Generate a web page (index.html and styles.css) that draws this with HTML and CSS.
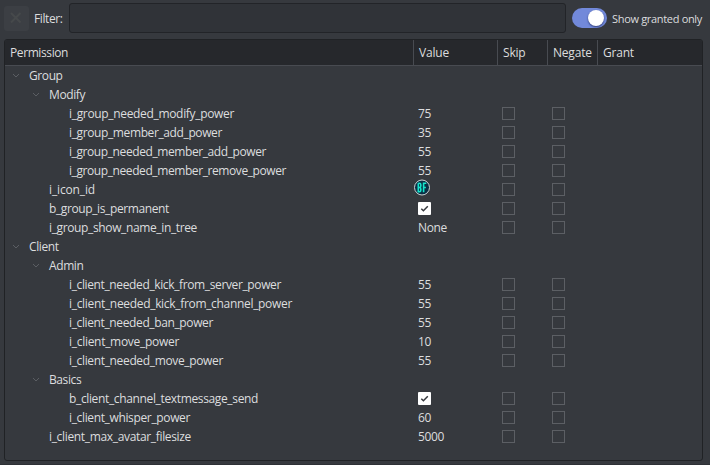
FILE: index.html
```html
<!DOCTYPE html>
<html lang="en">
<head>
<meta charset="utf-8">
<title>Permissions</title>
<link rel="stylesheet" href="styles.css">
</head>
<body>
<div class="toolbar">
  <button class="clear" aria-label="Clear"><svg width="25" height="25" viewBox="0 0 25 25"><path d="M7 7L16.5 16.5M16.5 7L7 16.5"/></svg></button>
  <label class="filter-label" for="filter">Filter:</label>
  <input class="filter" id="filter" type="text">
  <span class="toggle"><span class="knob"></span></span>
  <span class="toggle-label">Show granted only</span>
</div>
<div class="tree">
  <div class="head"><span class="title">Permission</span><span>Value</span><span>Skip</span><span>Negate</span><span>Grant</span></div>
  <div class="rows" id="rows"></div>
</div>
<script src="tree.js"></script>
</body>
</html>
```
FILE: styles.css
```css
* { box-sizing: border-box; }
body {
  margin: 0;
  width: 710px;
  height: 465px;
  overflow: hidden;
  padding: 3px 6px 0 4px;
  background: #36393e;
  border-bottom: 1px solid #2e3136;
  color: #dcddde;
  font: 12px/19px "Open Sans", "Noto Sans", sans-serif;
  letter-spacing: -0.2px;
}
.toolbar { display: flex; align-items: center; height: 30px; }
.toolbar > * { flex-shrink: 0; }
.clear {
  width: 25px;
  height: 25px;
  padding: 0;
  border: 0;
  border-radius: 3px;
  background: #3c3f44;
  margin-right: 5px;
}
.clear svg { display: block; fill: none; stroke: #46494b; stroke-width: 2; }
.filter-label { width: 35px; letter-spacing: -0.4px; }
.filter {
  width: 497px;
  height: 30px;
  border: 1px solid #222428;
  border-radius: 3px;
  background: #303338;
  color: inherit;
  font: inherit;
  margin: 0 6px 0 0;
}
.toggle {
  width: 35px;
  height: 20px;
  border-radius: 10px;
  background: #7289da;
  padding: 2px 3px;
  display: flex;
  justify-content: flex-end;
}
.knob {
  width: 16px;
  height: 16px;
  border-radius: 50%;
  background: #fff;
  box-shadow: 0 1px 2px #2d3b76;
}
.toggle-label { margin: 1px 0 0 5px; white-space: nowrap; font-size: 11px; letter-spacing: -0.32px; }
.tree {
  width: 699px;
  height: 422px;
  margin-top: 6px;
  border: 1px solid #202225;
  border-radius: 3px;
  overflow: hidden;
}
.head, .row { display: grid; grid-template-columns: 409px 84px 50px 50px 1fr; }
.head { height: 26px; background: #26282c; border-bottom: 1px solid #484b51; line-height: 26px; }
.head span { padding-left: 5px; border-right: 1px solid #484b51; }
.head span:last-child { border-right: 0; }
.head .title { letter-spacing: -0.4px; }
.row { height: 19px; align-items: center; }
.name { display: flex; white-space: nowrap; letter-spacing: -0.4px; }
.depth-0 { padding-left: 4px; }
.depth-1 { padding-left: 24px; }
.depth-2 { padding-left: 44px; }
.arrow, .spacer { flex: none; width: 20px; height: 19px; }
.arrow { fill: none; stroke: #5b5e63; }
.value { padding-left: 4px; height: 19px; letter-spacing: -0.4px; }
.check { display: block; width: 13px; height: 13px; margin-left: 4px; border: 1px solid #5c5f64; }
.value .check { margin: 3px 0 0; border: 0; border-radius: 1px; background: #fff; }
.check svg { display: block; fill: none; stroke: #36393e; stroke-width: 1.5; }
.badge { display: block; margin: -2px 0 0 -5px; }
.badge circle { fill: #082f45; stroke: #c9d5d6; }
.badge path { fill: none; stroke: #16e4cb; stroke-width: 1.6; }
```
FILE: tree.js
```js
const entries = [
  [0, "Group"],
  [1, "Modify"],
  [2, "i_group_needed_modify_power", "75", 165],
  [2, "i_group_member_add_power", "35", 153],
  [2, "i_group_needed_member_add_power", "55", 197],
  [2, "i_group_needed_member_remove_power", "55", 217],
  [1, "i_icon_id", "icon", 46],
  [1, "b_group_is_permanent", "checked", 120],
  [1, "i_group_show_name_in_tree", "None", 148],
  [0, "Client"],
  [1, "Admin"],
  [2, "i_client_needed_kick_from_server_power", "55", 212],
  [2, "i_client_needed_kick_from_channel_power", "55", 223],
  [2, "i_client_needed_ban_power", "55", 144],
  [2, "i_client_move_power", "10", 110],
  [2, "i_client_needed_move_power", "55", 154],
  [1, "Basics"],
  [2, "b_client_channel_textmessage_send", "checked", 189],
  [2, "i_client_whisper_power", "60", 121],
  [1, "i_client_max_avatar_filesize", "5000", 142]
];
const arrow = '<svg class="arrow" viewBox="0 0 20 19"><path d="M4 8L7 11L10 8"/></svg>';
const spacer = '<span class="spacer"></span>';
const badge = '<svg class="badge" width="18" height="18" viewBox="0 0 18 18"><circle cx="9" cy="9.5" r="7.5"/><path d="M5.3 5.2V13.8H6.5Q7.8 13.8 7.8 12.3V11Q7.8 9.5 6.5 9.5Q7.8 9.5 7.8 8V6.7Q7.8 5.2 6.5 5.2H5.3M5.3 9.5H7M10.6 14.3V5.2H13.3M10.6 9.5H12.9"/></svg>';
const tick = '<span class="check"><svg width="13" height="13" viewBox="0 0 13 13"><path d="M3.3 6.8L5.4 8.8L9.8 4.2"/></svg></span>';
const box = '<span class="check"></span>';
const rows = document.getElementById("rows");
for (const [depth, name, value, width] of entries) {
  const row = document.createElement("div");
  row.className = "row";
  const shown = value === "icon" ? badge : value === "checked" ? tick : value || "";
  row.innerHTML = `<div class="name depth-${depth}">${value ? spacer : arrow}<span class="text">${name}</span></div><div class="value">${shown}</div>${value ? box + box : ""}`;
  rows.append(row);
  if (width) {
    const text = row.querySelector(".text");
    text.style.letterSpacing = "0px";
    const natural = text.getBoundingClientRect().width;
    text.style.letterSpacing = (width - natural) / name.length + "px";
  }
}
```
